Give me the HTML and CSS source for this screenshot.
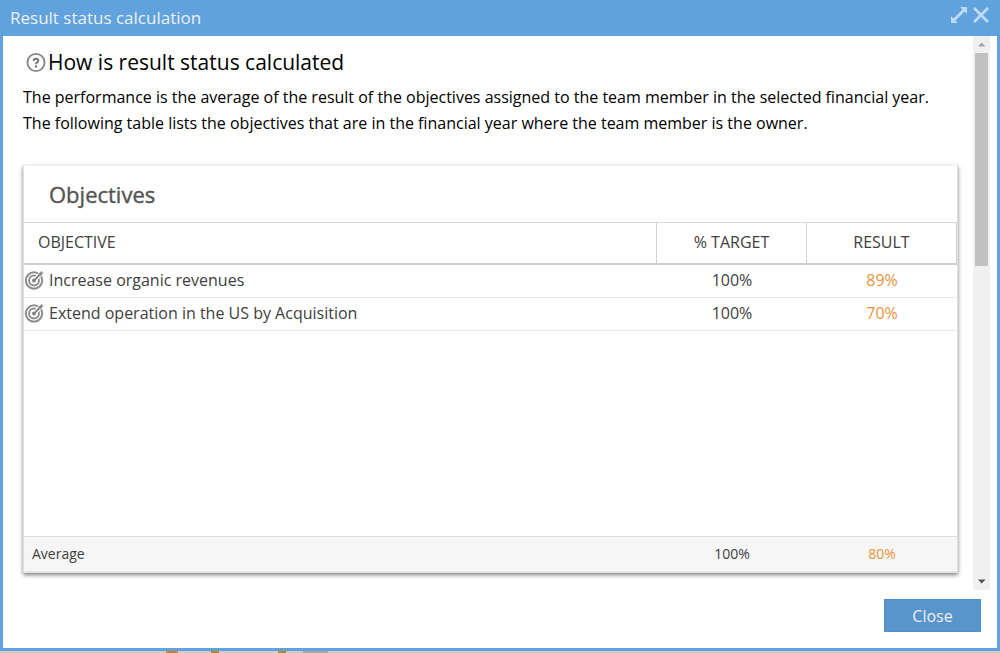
FILE: index.html
```html
<!DOCTYPE html>
<html lang="en">
<head>

    <meta charset="UTF-8">
    <title>Result status calculation</title>

    <meta name="viewport" content="width=device-width, initial-scale=1">

    <link rel="stylesheet" href="styles.css">

</head>
<body>

    <svg class="sprite" aria-hidden="true">
        <symbol id="target" viewBox="0 0 20 20">
            <circle cx="10" cy="10.5" r="8.2" fill="none" stroke="#8c8c8c" stroke-width="2"/>
            <circle cx="10" cy="10.5" r="4.9" fill="none" stroke="#8c8c8c" stroke-width="2"/>
            <circle cx="10" cy="10.5" r="1.9" fill="#808080"/>
            <path d="M11 9.5L18.5 2" stroke="#fff" stroke-width="4"/>
            <path d="M10 10.5L16.5 4" stroke="#808080" stroke-width="1.8"/>
            <path d="M14.5 3.8L18 .8L18 2.6L19.8 2.6L16.8 6L14.5 6z" fill="#8c8c8c"/>
        </symbol>
    </svg>

    <div class="dialog" role="dialog" aria-labelledby="dialog-title">

        <header class="dialog-header">
            <h1 id="dialog-title">Result status calculation</h1>
            <button type="button" class="tool" aria-label="Expand">
                <svg width="16" height="16" viewBox="0 0 16 16">
                    <path d="M3 13L13 3" stroke="currentColor" stroke-width="2.8"/>
                    <path d="M9 0h7v7zM0 9v7h7z" fill="currentColor"/>
                </svg>
            </button>
            <button type="button" class="tool" aria-label="Close window">
                <svg width="16" height="16" viewBox="0 0 16 16">
                    <path d="M1 1L15 15M15 1L1 15" stroke="currentColor" stroke-width="2.8"/>
                </svg>
            </button>
        </header>

        <div class="dialog-body">

            <main class="content">

                <h2>
                    <svg width="20" height="20" viewBox="0 0 20 20" aria-hidden="true">
                        <circle cx="10" cy="10.5" r="8.6" fill="none" stroke="#858585" stroke-width="1.8"/>
                        <path d="M7.6 8.8Q7.8 6.8 10 6.8Q12.3 6.8 12.3 8.7Q12.3 9.8 11.1 10.4Q10 11 10 12.2" fill="none" stroke="#777" stroke-width="1.9"/>
                        <circle cx="10" cy="14.4" r="1.2" fill="#777"/>
                    </svg>
                    How is result status calculated
                </h2>

                <p>
                    The performance is the average of the result of the objectives assigned to the team member in the selected financial year.
                    <br>
                    The following table lists the objectives that are in the financial year where the team member is the owner.
                </p>

                <section class="card">
                    <h3 id="card-title">Objectives</h3>
                    <table aria-labelledby="card-title">
                        <thead>
                            <tr>
                                <th scope="col">OBJECTIVE</th>
                                <th scope="col" class="num">% TARGET</th>
                                <th scope="col" class="num">RESULT</th>
                            </tr>
                        </thead>
                        <tbody>
                            <tr>
                                <td><span class="name"><svg width="20" height="20"><use href="#target"/></svg>Increase organic revenues</span></td>
                                <td class="num">100%</td>
                                <td class="num warn">89%</td>
                            </tr>
                            <tr>
                                <td><span class="name"><svg width="20" height="20"><use href="#target"/></svg>Extend operation in the US by Acquisition</span></td>
                                <td class="num">100%</td>
                                <td class="num warn">70%</td>
                            </tr>
                            <tr class="filler">
                                <td colspan="3"></td>
                            </tr>
                        </tbody>
                        <tfoot>
                            <tr>
                                <td>Average</td>
                                <td class="num">100%</td>
                                <td class="num warn">80%</td>
                            </tr>
                        </tfoot>
                    </table>
                </section>

            </main>

            <div class="scrollbar" aria-hidden="true">
                <svg width="17" height="17" viewBox="0 0 17 17"><path d="M5 10.5h7.5L8.7 6.5z" fill="#a3a3a3"/></svg>
                <div class="track"><div class="thumb"></div></div>
                <svg width="17" height="17" viewBox="0 0 17 17"><path d="M5 6.5h7.5L8.7 10.5z" fill="#505050"/></svg>
            </div>

        </div>

        <footer class="dialog-footer">
            <button type="button" class="btn">Close</button>
        </footer>

    </div>

    <!-- edge of the page behind the dialog -->
    <div class="behind"></div>

</body>
</html>
```
FILE: styles.css
```css
html {
    box-sizing: border-box;
}

*,
*:before,
*:after {
    box-sizing: inherit;
}

body {
    display: flex;
    flex-direction: column;
    height: 100vh;
    margin: 0;
    color: #000;
    background: #fff;
    font-family: "Open Sans", Arial, sans-serif;
    font-size: 16px;
    line-height: 26px;
}

h1,
h2,
h3,
p {
    margin: 0;
    font-weight: 400;
}

button {
    font-family: inherit;
    cursor: pointer;
}

.sprite {
    position: absolute;
    width: 0;
    height: 0;
}

.dialog {
    display: flex;
    flex: 1;
    flex-direction: column;
    min-height: 0;
    border: 3px solid #5fa2dd;
    border-top: 0;
}

.dialog-header {
    display: flex;
    align-items: center;
    gap: 6px;
    height: 36px;
    padding: 0 8px 0 7px;
    color: #f0f0f0;
    background: #5fa2dd;
}

.dialog-header h1 {
    flex: 1;
    font-size: 17px;
}

.tool {
    width: 16px;
    height: 16px;
    margin-bottom: 6px;
    padding: 0;
    border: 0;
    color: #bfdaf2;
    background: none;
}

.tool svg {
    display: block;
}

.dialog-body {
    display: flex;
    flex: 1;
    min-height: 0;
    padding-right: 7px;
}

.content {
    display: flex;
    flex: 1;
    flex-direction: column;
    min-width: 0;
    padding: 12px 15px 17px 20px;
}

.content h2 {
    display: flex;
    align-items: center;
    gap: 2px;
    padding-left: 3px;
    font-size: 21px;
    line-height: 28px;
}

.content p {
    margin: 8px 0 29px;
}

.card {
    display: flex;
    flex: 1;
    flex-direction: column;
    border: 1px solid #e0e0e0;
    border-top-color: #f4f4f4;
    color: #404040;
    box-shadow: 0 2px 4px rgba( 0, 0, 0, .5 );
}

.card h3 {
    padding: 14px 25px;
    color: #555;
    font-size: 22px;
    line-height: 28px;
    -webkit-text-stroke: .4px #555;
}

.card table {
    flex: 1;
    width: 100%;
    table-layout: fixed;
    border-collapse: separate;
    border-spacing: 0;
}

th,
td {
    padding: 0;
    font-weight: 400;
    text-align: left;
}

th {
    height: 43px;
    padding: 0 0 2px 14px;
    border-top: 1px solid #d8d8d8;
    border-right: 1px solid #d0d0d0;
    border-bottom: 2px solid #ccd0cf;
}

.num {
    width: 150px;
    padding-left: 0;
    text-align: center;
}

td {
    height: 33px;
    padding-bottom: 2px;
    border-bottom: 1px solid #e8e8e8;
}

.name {
    display: flex;
    align-items: center;
    gap: 5px;
}

.warn {
    color: #ea923c;
}

.filler td {
    height: auto;
    border: 0;
}

tfoot td {
    height: 36px;
    padding-bottom: 0;
    border-top: 1px solid #ddd;
    background: #f6f6f6;
    font-size: 14px;
}

tfoot td:first-child {
    padding-left: 8px;
}

.scrollbar {
    display: flex;
    flex-direction: column;
    width: 17px;
    background: #f0f0f0;
}

.track {
    flex: 1;
    padding: 0 2px;
}

.thumb {
    height: 41%;
    background: #c1c1c1;
}

.dialog-footer {
    display: flex;
    justify-content: flex-end;
    padding: 9px 16px 16px;
}

.btn {
    width: 97px;
    height: 33px;
    padding: 0;
    border: 1px solid #4b8fcb;
    color: #f0f0f0;
    background: #5795cb;
    font-size: 16px;
}

.behind {
    height: 2px;
    background: linear-gradient( to right,
        #ccc 166px, #d08018 166px, #d08018 178px,
        #ccc 178px, #ccc 211px, #ba8a18 211px, #ba8a18 219px,
        #ccc 219px, #ccc 278px, #ba8a18 278px, #ba8a18 286px,
        #ccc 286px, #ccc 303px, #aaa 303px, #aaa 328px, #ccc 328px );
}
```
